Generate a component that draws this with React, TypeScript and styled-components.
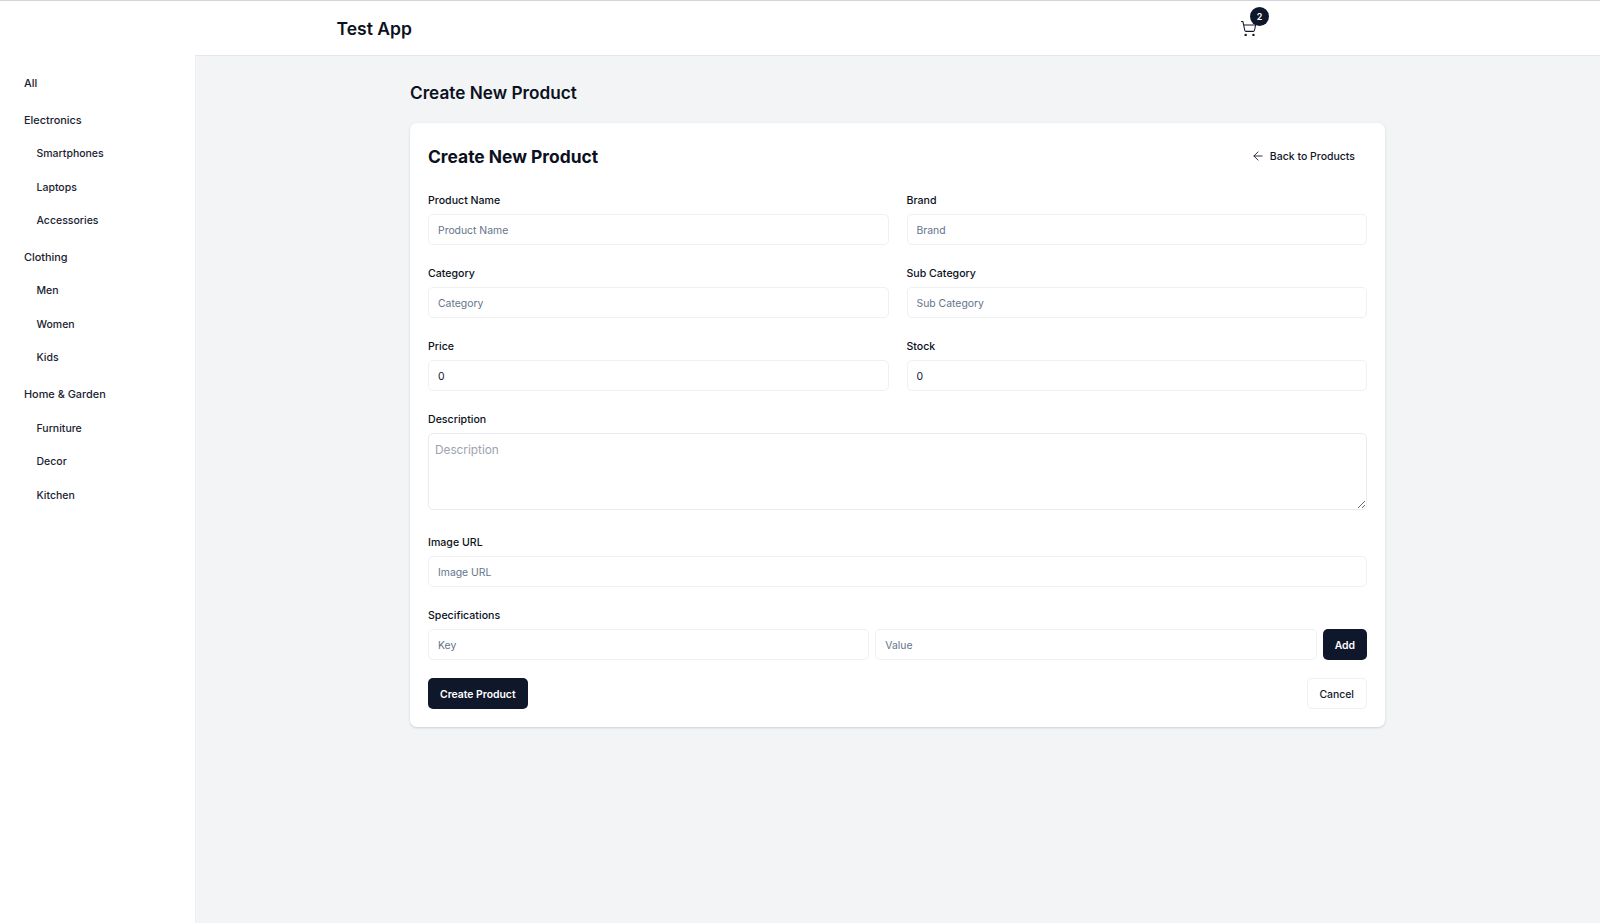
import * as React from 'react';
import styled, { createGlobalStyle } from 'styled-components';
import { ArrowLeft, ShoppingCart } from 'lucide-react';

const ink = '#0f172a';
const line = '#e8ebf0';

const GlobalStyle = createGlobalStyle`
	html, body {
		margin: 0;
		padding: 0;
		height: 100%;
		background: #ffffff;
		color: ${ink};
		font-family: Inter, "Liberation Sans", sans-serif;
	}
	* {
		box-sizing: border-box;
	}
`;

const Page = styled.div`
	display: flex;
	flex-direction: column;
	height: 923px;
	overflow: hidden;
`;

const Header = styled.header`
	flex: none;
	display: flex;
	align-items: center;
	justify-content: space-between;
	height: 55px;
	padding: 0 343px 0 336.5px;
	background: #ffffff;
	border-top: 1px solid #d4d4d8;
`;

const AppTitle = styled.div`
	padding-top: 1px;
	font-size: 17.5px;
	font-weight: 600;
	color: #0b1120;
`;

const CartButton = styled.div`
	position: relative;
	display: flex;
	width: 17px;
	height: 17px;
	margin-top: 1px;
	color: ${ink};
`;

const CartBadge = styled.span`
	position: absolute;
	top: -13px;
	left: 10px;
	width: 19px;
	height: 19px;
	border-radius: 50%;
	display: flex;
	align-items: center;
	justify-content: center;
	background: ${ink};
	color: #ffffff;
	font-size: 9px;
	font-weight: 600;
`;

const Body = styled.div`
	flex: 1;
	display: flex;
	min-height: 0;
`;

const Sidebar = styled.nav`
	flex: none;
	width: 195px;
	padding: 18px 0 0 24px;
	background: #ffffff;
`;

const CategoryLink = styled.div<{ $sub?: boolean }>`
	height: ${(p) => (p.$sub ? '33.5px' : '20px')};
	margin-top: ${(p) => (p.$sub ? '0' : '17px')};
	padding-left: ${(p) => (p.$sub ? '12.5px' : '0')};
	display: flex;
	align-items: center;
	font-size: ${(p) => (p.$sub ? '10.5px' : '10.9px')};
	font-weight: 500;
	color: #1a2231;

	&:first-child {
		margin-top: 0;
	}
`;

const SubList = styled.div`
	padding-top: 7px;
	margin-bottom: -7.3px;
`;

const Main = styled.main`
	flex: 1;
	min-width: 0;
	padding: 25px 215px 0 215px;
	background: #f3f4f6;
	border-top: 1px solid #e5e7eb;
	box-shadow: inset 1px 0 1px rgba(0, 0, 0, 0.02);
`;

const PageTitle = styled.h1`
	margin: 0 0 18px;
	height: 24px;
	line-height: 24px;
	font-size: 17.2px;
	font-weight: 600;
	color: #0b1120;
`;

const Card = styled.section`
	background: #ffffff;
	border-radius: 7px;
	padding: 18px;
	box-shadow: 0 1px 3px rgba(0, 0, 0, 0.1), 0 1px 2px rgba(0, 0, 0, 0.06);
`;

const CardHead = styled.div`
	display: flex;
	align-items: center;
	justify-content: space-between;
	height: 30px;
	margin: 0 0 22px;
`;

const CardTitle = styled.h2`
	margin: 0;
	font-size: 17.4px;
	font-weight: 700;
	color: #0b1120;
`;

const BackLink = styled.div`
	display: flex;
	align-items: center;
	gap: 5px;
	padding-right: 12px;
	font-size: 10.5px;
	font-weight: 500;
	color: ${ink};
`;

const Grid = styled.div`
	display: grid;
	grid-template-columns: 1fr 1fr;
	column-gap: 18px;
	row-gap: 21px;
`;

const Field = styled.div<{ $wide?: boolean }>`
	grid-column: ${(p) => (p.$wide ? '1 / -1' : 'auto')};
	min-width: 0;
`;

const Label = styled.label`
	display: block;
	height: 15px;
	padding-top: 1px;
	line-height: 14px;
	margin-bottom: 6px;
	font-size: 10.6px;
	font-weight: 500;
	color: #0b1120;
`;

const Input = styled.input`
	display: block;
	width: 100%;
	height: 31px;
	min-width: 0;
	padding: 1px 9px 0;
	border: 1px solid #eef0f4;
	border-radius: 5px;
	background: #ffffff;
	font-family: inherit;
	font-size: 10.4px;
	color: ${ink};
	outline: none;

	&::placeholder {
		color: #64748b;
		opacity: 1;
	}
`;

const TextArea = styled.textarea`
	display: block;
	width: 100%;
	height: 77px;
	margin-bottom: 4px;
	padding: 9px 6px 8px;
	border: 1px solid ${line};
	border-radius: 5px;
	background: #ffffff;
	font-family: inherit;
	font-size: 11.8px;
	color: ${ink};
	outline: none;

	&::placeholder {
		color: #9ca3af;
		opacity: 1;
	}
`;

const SpecRow = styled.div`
	display: flex;
	gap: 6px;
`;

const PrimaryButton = styled.button`
	flex: none;
	height: 31px;
	padding: 1px 12px 0;
	border: none;
	border-radius: 5px;
	background: ${ink};
	color: #ffffff;
	font-family: inherit;
	font-size: 10.4px;
	font-weight: 600;
`;

const OutlineButton = styled.button`
	height: 31px;
	padding: 1px 12px 0;
	border: 1px solid #eef0f4;
	border-radius: 5px;
	background: #ffffff;
	color: ${ink};
	font-family: inherit;
	font-size: 10.4px;
	font-weight: 500;
`;

const Actions = styled.div`
	display: flex;
	justify-content: space-between;
	margin-top: 18px;
`;

const categories: { name: string; children: string[] }[] = [
	{ name: 'All', children: [] },
	{ name: 'Electronics', children: ['Smartphones', 'Laptops', 'Accessories'] },
	{ name: 'Clothing', children: ['Men', 'Women', 'Kids'] },
	{ name: 'Home & Garden', children: ['Furniture', 'Decor', 'Kitchen'] },
];

const App: React.FC = () => {
	return (
		<Page>
			<GlobalStyle />
			<Header>
				<AppTitle>Test App</AppTitle>
				<CartButton>
					<ShoppingCart size={17} strokeWidth={1.5} />
					<CartBadge>2</CartBadge>
				</CartButton>
			</Header>
			<Body>
				<Sidebar>
					{categories.map((category) => (
						<React.Fragment key={category.name}>
							<CategoryLink>{category.name}</CategoryLink>
							{category.children.length > 0 && (
								<SubList>
									{category.children.map((child) => (
										<CategoryLink $sub key={child}>{child}</CategoryLink>
									))}
								</SubList>
							)}
						</React.Fragment>
					))}
				</Sidebar>
				<Main>
					<PageTitle>Create New Product</PageTitle>
					<Card>
						<CardHead>
							<CardTitle>Create New Product</CardTitle>
							<BackLink>
								<ArrowLeft size={14} strokeWidth={1.5} />
								Back to Products
							</BackLink>
						</CardHead>
						<Grid>
							<Field>
								<Label>Product Name</Label>
								<Input placeholder="Product Name" />
							</Field>
							<Field>
								<Label>Brand</Label>
								<Input placeholder="Brand" />
							</Field>
							<Field>
								<Label>Category</Label>
								<Input placeholder="Category" />
							</Field>
							<Field>
								<Label>Sub Category</Label>
								<Input placeholder="Sub Category" />
							</Field>
							<Field>
								<Label>Price</Label>
								<Input defaultValue="0" />
							</Field>
							<Field>
								<Label>Stock</Label>
								<Input defaultValue="0" />
							</Field>
							<Field $wide>
								<Label>Description</Label>
								<TextArea placeholder="Description" />
							</Field>
							<Field $wide>
								<Label>Image URL</Label>
								<Input placeholder="Image URL" />
							</Field>
							<Field $wide>
								<Label>Specifications</Label>
								<SpecRow>
									<Input placeholder="Key" />
									<Input placeholder="Value" />
									<PrimaryButton>Add</PrimaryButton>
								</SpecRow>
							</Field>
						</Grid>
						<Actions>
							<PrimaryButton>Create Product</PrimaryButton>
							<OutlineButton>Cancel</OutlineButton>
						</Actions>
					</Card>
				</Main>
			</Body>
		</Page>
	);
};

export default App;
